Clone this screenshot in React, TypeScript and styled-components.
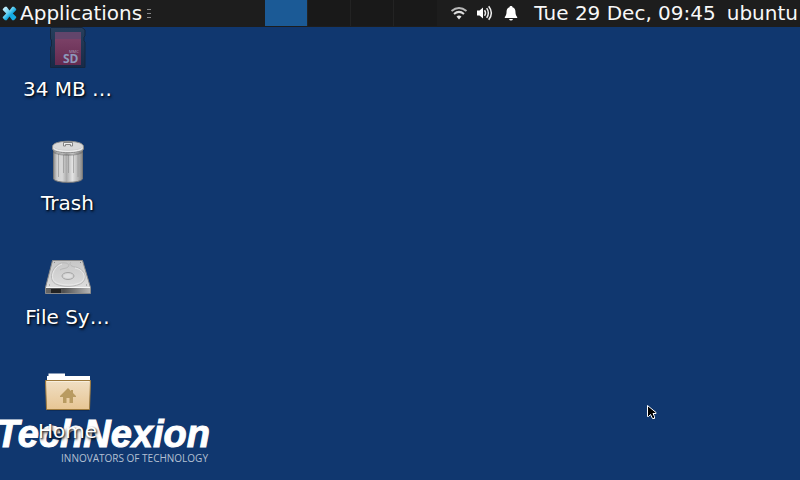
import React from "react";
import styled, { createGlobalStyle } from "styled-components";

const GlobalStyle = createGlobalStyle`
  * { box-sizing: border-box; }
  body {
    margin: 0;
    background: #10376f;
    color: #fff;
    font-family: "DejaVu Sans", sans-serif;
    font-size: 20px;
    line-height: 24px;
  }
  button {
    font: inherit;
    color: inherit;
    background: none;
    border: 0;
    padding: 0;
    margin: 0;
  }
`;

const Screen = styled.div`
  position: relative;
  min-height: 100vh;
  overflow: hidden;
  border-bottom: 1px solid #0e3266;
`;

const Panel = styled.header`
  position: absolute;
  top: 0;
  left: 0;
  right: 0;
  z-index: 2;
  display: flex;
  align-items: center;
  height: 27px;
  padding: 0 2px 1px;
  background: #1d1d1d;
  color: #f8f8f8;
  white-space: nowrap;
`;

const MenuButton = styled.button`
  display: flex;
  align-items: center;
  gap: 3px;
  height: 24px;
`;

const Grip = styled.span`
  display: flex;
  flex-direction: column;
  gap: 3px;
  margin-left: 5px;
`;

const GripLine = styled.i`
  width: 4px;
  height: 1px;
  background: #8a8a8a;
`;

const Pager = styled.nav`
  display: flex;
  align-self: flex-start;
  margin-left: auto;
  height: 26px;
  background: #191919;
`;

const Workspace = styled.button<{ $active?: boolean }>`
  width: 43px;
  border-right: 1px solid #232323;
  background: ${(p) => (p.$active ? "#1b5a96" : "transparent")};
  &:last-child { border-right: 0; }
`;

const Tray = styled.div`
  display: flex;
  align-items: center;
  gap: 8px;
  margin: 0 14px 0 13px;
`;

const TrayButton = styled.button`
  display: flex;
  width: 18px;
  height: 18px;
`;

const StatusButton = styled.button`
  height: 24px;
  & + & { margin-left: 11px; }
`;

const Desktop = styled.main`
  position: relative;
  z-index: 1;
  display: flex;
  flex-direction: column;
  align-items: flex-start;
  padding-top: 24px;
`;

const DesktopItem = styled.button`
  display: flex;
  flex-direction: column;
  align-items: center;
  gap: 5px;
  width: 136px;
  height: 114px;
`;

const ItemLabel = styled.span`
  padding-right: 1px;
  text-shadow: 1px 1px 2px rgba(0, 0, 0, 0.8), 1px 2px 3px rgba(0, 0, 0, 0.5);
`;

const Wallpaper = styled.div`
  position: absolute;
  left: -4px;
  bottom: 16px;
  display: flex;
  flex-direction: column;
  align-items: flex-end;
`;

const Brand = styled.div`
  font-family: "Liberation Sans", sans-serif;
  font-size: 38px;
  line-height: 36px;
  font-weight: 700;
  font-style: italic;
  -webkit-text-stroke: 1px #fff;
`;

const Tagline = styled.div`
  padding-right: 2px;
  font-family: "Open Sans", sans-serif;
  font-size: 10px;
  line-height: 12px;
  color: #b4c0d3;
`;

const Pointer = styled.svg`
  position: absolute;
  left: 646px;
  top: 404px;
  z-index: 3;
  pointer-events: none;
`;

const MenuLogo = () => (
  <svg width="15" height="16" viewBox="0 0 15 16" aria-hidden="true">
    <defs>
      <linearGradient id="menu" x1="0" y1="0" x2="1" y2="1">
        <stop offset="0" stopColor="#e8faff" />
        <stop offset=".42" stopColor="#62cff2" />
        <stop offset=".6" stopColor="#12a8e0" />
        <stop offset="1" stopColor="#1baee6" />
      </linearGradient>
    </defs>
    <path d="M.8 4 3 1.800h1.700L7.500 5.500l2.800-3.700H12L14.200 4v1l-3.400 3.500 3.400 3.300v1L12 15.200h-1.700L7.500 11.500l-2.800 3.700H3L.8 13v-1l3.400-3.500L.8 5z" fill="url(#menu)" />
  </svg>
);

const Wifi = () => (
  <svg width="18" height="18" viewBox="0 0 18 18" fill="none" strokeWidth="2" aria-hidden="true">
    <path d="M1.500 7Q9 1 16.500 7" stroke="#b9b9b9" />
    <path d="M4 10Q9 5.800 14 10" stroke="#dedede" />
    <path d="M6.500 12.500Q9 10.500 11.500 12.500L9 15.500z" fill="#e4e4e4" />
  </svg>
);

const Volume = () => (
  <svg width="18" height="18" viewBox="0 0 18 18" fill="none" stroke="#eee" strokeWidth="1.500" aria-hidden="true">
    <path d="M1 6.500h2.500L7 3.500v11L3.500 11.500H1z" fill="#fff" stroke="none" />
    <path d="M8.500 6.200Q10.500 9 8.500 11.800M10.700 4.200Q14 9 10.700 13.800M12.700 2.200Q18 9 12.700 15.800" />
  </svg>
);

const Bell = () => (
  <svg width="18" height="18" viewBox="0 0 18 18" fill="#fff" aria-hidden="true">
    <path d="M9 2C10 2 10.500 2.500 10.500 3.300C13 4 13.500 6 13.500 8.500C13.500 11 14.500 12 15.200 13V14H2.800V13C3.500 12 4.500 11 4.500 8.500C4.500 6 5 4 7.500 3.300C7.500 2.500 8 2 9 2zM7 15h4Q10.500 16.500 9 16.500T7 15z" />
  </svg>
);

const SdCard = () => (
  <svg width="48" height="48" viewBox="0 0 48 48" aria-hidden="true">
    <defs>
      <linearGradient id="sd" x1="0" y1="0" x2="0" y2="1">
        <stop offset="0" stopColor="#263f5d" />
        <stop offset="1" stopColor="#182a47" />
      </linearGradient>
      <linearGradient id="sdLabel" x1="0" y1="0" x2="0" y2="1">
        <stop offset="0" stopColor="#80466c" />
        <stop offset="1" stopColor="#652b50" />
      </linearGradient>
    </defs>
    <path d="M7 3.500h31L41 6v6l-1 1v4l1 1v25.500H6.500V23l1-1v-6l-1-1V4.500z" fill="url(#sd)" stroke="#14263f" />
    <path d="M11 8h26v33H11z" fill="url(#sdLabel)" />
    <path d="M11 8h26v7H11z" fill="#62456b" />
    <text x="19" y="39" fontFamily="Open Sans, sans-serif" fontWeight="700" fontSize="12" fill="#8d99bc">SD</text>
    <text x="25" y="29" fontFamily="Open Sans, sans-serif" fontSize="4" fill="#a69dbb">MMC</text>
  </svg>
);

const Trash = () => (
  <svg width="48" height="48" viewBox="0 0 48 48" aria-hidden="true">
    <defs>
      <linearGradient id="can">
        <stop offset="0" stopColor="#8a8a8a" />
        <stop offset=".12" stopColor="#d0d0d0" />
        <stop offset=".3" stopColor="#d8d8d8" />
        <stop offset=".45" stopColor="#acacac" />
        <stop offset=".65" stopColor="#e4e4e4" />
        <stop offset=".85" stopColor="#b4b4b4" />
        <stop offset="1" stopColor="#858585" />
      </linearGradient>
    </defs>
    <path d="M9.500 10v31c2 4.500 27 4.500 29 0V10z" fill="url(#can)" stroke="#777" />
    <path d="M14.500 16v23M19.500 17v18M24.500 17v18M29.500 17v18M34 16v23" stroke="#8c8c8c" strokeOpacity=".6" />
    <path d="M9 12c2 5 28 5 30 0v2c-2 5-28 5-30 0z" fill="#555" fillOpacity=".4" />
    <path d="M8.500 8.500c0-7 31-7 31 0v2.500c-2 5-29 5-31 0z" fill="#cfcfcf" stroke="#8a8a8a" />
    <ellipse cx="24" cy="8" rx="14.500" ry="3.800" fill="#d9d9d9" />
    <path d="M9.500 10c2 4.500 27 4.500 29 0" fill="none" stroke="#f3f3f3" />
    <path d="M19.500 8V4.500h9V8h-2V6.500h-5V8z" fill="#eee" stroke="#858585" />
  </svg>
);

const Drive = () => (
  <svg width="48" height="48" viewBox="0 0 48 48" aria-hidden="true">
    <defs>
      <linearGradient id="driveTop" x1="0" y1="0" x2="0" y2="1">
        <stop offset="0" stopColor="#c7c7c7" />
        <stop offset="1" stopColor="#e1e1e1" />
      </linearGradient>
      <linearGradient id="driveFront">
        <stop offset="0" stopColor="#666" />
        <stop offset=".4" stopColor="#505050" />
        <stop offset="1" stopColor="#b5b5b5" />
      </linearGradient>
    </defs>
    <path d="M8.500 8.500h30l8 27v6h-45v-6z" fill="url(#driveTop)" stroke="#898989" />
    <path d="M2 36h44v5H2z" fill="url(#driveFront)" />
    <path d="M7 37h10v4H7z" fill="#222" />
    <path d="M2 35.500h44" stroke="#f6f6f6" />
    <path d="M17 11C8 14 3 29 13 32.500c6 2.500 16 2.500 22 0C45 29 42 17 31 15c-5-1-6-3-4-5M17 11c7-1 9 2 7 4s-6 1-8 3" fill="none" stroke="#b8b8b8" />
    <path d="M18 12C9 15 4 28 14 31.500c6 2 15 2 20 0C44 28 41 18 31 16" fill="none" stroke="#e9e9e9" />
    <ellipse cx="24" cy="24" rx="6" ry="3.500" fill="#d3d3d3" stroke="#a4a4a4" />
    <ellipse cx="24" cy="24" rx="4" ry="2" fill="#dedede" />
    <path d="M5 33h1M42 33h1M10 10.500h1M36 10.500h1" stroke="#888" />
  </svg>
);

const HomeFolder = () => (
  <svg width="48" height="48" viewBox="0 0 48 48" aria-hidden="true">
    <defs>
      <linearGradient id="folder" x1="0" y1="0" x2="0" y2="1">
        <stop offset="0" stopColor="#f0dfc4" />
        <stop offset="1" stopColor="#e7c593" />
      </linearGradient>
    </defs>
    <path d="M3 17v-7h1.500V7.500H21V10h25v7z" fill="#fff" />
    <path d="M1.500 14.500h45L45.500 43.500h-43z" fill="url(#folder)" stroke="#9e7a3c" />
    <path d="M3 15.500h42" stroke="#f8efde" />
    <path d="M3 44.500h42" stroke="#0b244b" strokeOpacity=".6" />
    <path d="m24 22 3 3v-1h2v3l3 3v1h-3v6h-3.500v-5h-3v5H19v-6h-3v-1z" fill="#b99b61" />
  </svg>
);

const items = [
  { label: "34 MB …", Icon: SdCard },
  { label: "Trash", Icon: Trash },
  { label: "File Sy…", Icon: Drive },
  { label: "Home", Icon: HomeFolder },
];

const trayItems = [
  { label: "Network", Icon: Wifi },
  { label: "Volume", Icon: Volume },
  { label: "Notifications", Icon: Bell },
];

export default function App() {
  return (
    <>
      <GlobalStyle />
      <Screen>
        <Panel>
          <MenuButton>
            <MenuLogo />
            Applications
          </MenuButton>
          <Grip>
            <GripLine />
            <GripLine />
            <GripLine />
          </Grip>
          <Pager aria-label="Workspaces">
            {[1, 2, 3, 4].map((n) => (
              <Workspace key={n} $active={n === 1} aria-label={`Workspace ${n}`} />
            ))}
          </Pager>
          <Tray>
            {trayItems.map(({ label, Icon }) => (
              <TrayButton key={label} aria-label={label}>
                <Icon />
              </TrayButton>
            ))}
          </Tray>
          <StatusButton>Tue 29 Dec, 09:45</StatusButton>
          <StatusButton>ubuntu</StatusButton>
        </Panel>
        <Wallpaper>
          <Brand>TechNexion</Brand>
          <Tagline>INNOVATORS OF TECHNOLOGY</Tagline>
        </Wallpaper>
        <Desktop>
          {items.map(({ label, Icon }) => (
            <DesktopItem key={label}>
              <Icon />
              <ItemLabel>{label}</ItemLabel>
            </DesktopItem>
          ))}
        </Desktop>
        <Pointer width="11" height="17" viewBox="0 0 11 17" aria-hidden="true">
          <path d="M1.500 1.500v11h1l2-2 2 4h2v-2l-1.500-3h3V8.500z" fill="#000" stroke="#fff" />
        </Pointer>
      </Screen>
    </>
  );
}
